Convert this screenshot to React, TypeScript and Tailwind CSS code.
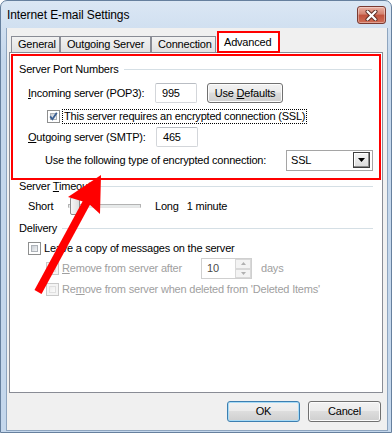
import React from "react";

const U = ({ children }: { children: React.ReactNode }) => (
  <span className="underline underline-offset-[1px] decoration-[1px]">{children}</span>
);

function Checkbox({ checked = false, disabled = false }: { checked?: boolean; disabled?: boolean }) {
  return (
    <div
      className={
        disabled
          ? "relative w-[13px] h-[13px] shrink-0 border border-[#c9c9c9] bg-[#f4f4f4] p-[2px]"
          : "relative w-[13px] h-[13px] shrink-0 border border-[#8e8f8f] bg-white p-[2px]"
      }
    >
      <div
        className={
          disabled
            ? "w-full h-full border border-[#e0e0e0] bg-[linear-gradient(135deg,#ececec,#fbfbfb)]"
            : "w-full h-full border border-[#adb2b8] bg-[linear-gradient(135deg,#c9ced4,#f4f5f6)]"
        }
      />
      {checked && (
        <svg className="absolute left-0 top-0" width="11" height="11" viewBox="0 0 11 11">
          <path d="M2.2 5.4 L4.4 8.2 L8.8 1.8" fill="none" stroke="#3a5f92" strokeWidth="1.8" />
        </svg>
      )}
    </div>
  );
}

function Tab({ w, children }: { w: string; children: React.ReactNode }) {
  return (
    <div
      className={`${w} h-[16px] border-t border-l border-r border-[#898c95] bg-[linear-gradient(#f2f2f2,#e2e2e2)] pl-[6px] flex items-center text-[11px] tracking-[-0.2px] text-black`}
    >
      {children}
    </div>
  );
}

export default function App() {
  return (
    <div className="relative w-[392px] h-[433px] overflow-hidden rounded-t-[7px] border border-[#66809e] bg-[linear-gradient(#dbe7f4,#c4d7ec_60px,#c4d7ec)] font-['Liberation_Sans',Arial,sans-serif] text-black">
      {/* Title bar */}
      <div className="h-[27px] flex items-center pl-[6px] pr-[5px]">
        <div className="text-[12px] tracking-[-0.1px] text-black">Internet E-mail Settings</div>
        <div className="flex-1" />
        <div className="w-[29px] h-[18px] mt-[1px] rounded-[3px] border border-[#7a3a31] bg-[linear-gradient(#eab0a2,#d3826f_45%,#c0513c_50%,#cf6e57)] shadow-[inset_0_0_0_1px_rgba(255,255,255,0.35)] flex items-center justify-center">
          <svg width="13" height="11" viewBox="0 0 13 11">
            <path d="M2.5 1.5 L10.5 9.5 M10.5 1.5 L2.5 9.5" stroke="#5a2a22" strokeWidth="4" strokeLinecap="round" />
            <path d="M2.5 1.5 L10.5 9.5 M10.5 1.5 L2.5 9.5" stroke="#ffffff" strokeWidth="2.2" strokeLinecap="round" />
          </svg>
        </div>
      </div>

      {/* middle */}
      <div className="flex">
        <div className="w-[5px]" />
        <div className="w-[382px] h-[403px] border-x border-b border-[#8ea5bf] bg-[#f0f0f0] flex flex-col">
          {/* Tabs */}
          <div className="h-[24px] flex items-end pl-[4px]">
            <Tab w="w-[49px]">General</Tab>
            <Tab w="w-[91px]">Outgoing Server</Tab>
            <Tab w="w-[65px]">Connection</Tab>
            <div className="relative z-10 ml-[1px] mb-[-1px] w-[63px] h-[22px] border-2 border-[#ff0000] bg-white pl-[5px] flex items-center text-[11px] tracking-[-0.2px]">
              Advanced
            </div>
          </div>

          {/* Panel */}
          <div className="ml-[2px] w-[374px] h-[341px] border border-[#898c95] bg-white flex flex-col text-[11px] tracking-[-0.2px]">
            {/* Red box - Server Port Numbers */}
            <div className="mt-[1px] ml-[1px] w-[370px] border-2 border-[#ff0000] pt-[6px] pb-[8px] flex flex-col">
              <div className="h-[14px] flex items-center pl-[6px] pr-[7px]">
                <span>Server Port Numbers</span>
                <div className="flex-1 ml-[5px] h-px bg-[#d5dfe5]" />
              </div>
              <div className="mt-[7px] h-[20px] flex items-center pl-[15px]">
                <div className="w-[127px]">
                  <U>I</U>ncoming server (POP3):
                </div>
                <div className="w-[42px] h-[20px] rounded-[2px] border border-[#d3d6da] border-t-[#b9bdc3] bg-white pl-[6px] flex items-center">
                  995
                </div>
                <button className="ml-[10px] w-[76px] h-[20px] rounded-[3px] border border-[#707070] bg-[linear-gradient(#f2f2f2,#ebebeb_45%,#dddddd_50%,#cfcfcf)] shadow-[inset_0_0_0_1px_#fbfbfb] flex items-center justify-center text-[11px] tracking-[-0.2px]">
                  Use&nbsp;<U>D</U>efaults
                </button>
              </div>
              <div className="mt-[6px] h-[14px] flex items-center pl-[34px]">
                <Checkbox checked />
                <div className="ml-[2px] h-[15px] border border-dotted border-black pl-[1px] pr-[1px] flex items-center">
                  This server requires an encrypted connection (SSL)
                </div>
              </div>
              <div className="mt-[4px] h-[20px] flex items-center pl-[15px]">
                <div className="w-[128px]">
                  <U>O</U>utgoing server (SMTP):
                </div>
                <div className="w-[42px] h-[20px] rounded-[2px] border border-[#d3d6da] border-t-[#b9bdc3] bg-white pl-[6px] flex items-center">
                  465
                </div>
              </div>
              <div className="mt-[3px] h-[20px] flex items-center pl-[32px]">
                <div className="w-[241px]">Use the following type of encrypted connection:</div>
                <div className="w-[87px] h-[21px] border border-[#a5a5a5] bg-white pl-[4px] pr-[2px] flex items-center">
                  <span className="flex-1">SSL</span>
                  <div className="w-[17px] h-[16px] border border-[#3f3f3f] bg-[linear-gradient(#f4f4f4,#dcdcdc)] shadow-[inset_-1px_-1px_0_#8a8a8a,inset_1px_1px_0_#ffffff] flex items-center justify-center">
                    <svg width="7" height="4" viewBox="0 0 7 4">
                      <path d="M0 0 L7 0 L3.5 4 Z" fill="#000" />
                    </svg>
                  </div>
                </div>
              </div>
            </div>

            {/* Server Timeout */}
            <div className="h-[12px] flex items-center pl-[9px] pr-[9px]">
              <span>
                Server <U>T</U>imeout
              </span>
              <div className="flex-1 ml-[5px] h-px bg-[#d5dfe5]" />
            </div>
            <div className="mt-[4px] h-[20px] flex items-center pl-[18px]">
              <div className="w-[40px]">Short</div>
              <div className="relative w-[73px] h-[20px]">
                <div className="absolute left-0 right-0 top-[8px] h-[4px] border border-[#b3b3b3] border-b-[#e6e6e6] bg-[#e7eaea]" />
                <div className="absolute left-[2px] top-[1px] w-[10px] h-[18px] rounded-[2px] border border-[#8c8c8c] bg-[linear-gradient(90deg,#f7f7f7,#dedede)]" />
              </div>
              <div className="ml-[14px]">Long</div>
              <div className="ml-[8px]">1 minute</div>
            </div>

            {/* Delivery */}
            <div className="mt-[6px] h-[13px] flex items-center pl-[9px] pr-[9px]">
              <span>Delivery</span>
              <div className="flex-1 ml-[5px] h-px bg-[#d5dfe5]" />
            </div>
            <div className="mt-[6px] h-[14px] flex items-center pl-[18px]">
              <Checkbox />
              <div className="ml-[3px]">Leave a copy of messages on the server</div>
            </div>
            <div className="mt-[3px] h-[21px] flex items-center pl-[36px] text-[#a0a0a0]">
              <Checkbox disabled />
              <div className="ml-[3px] w-[139px]">
                <U>R</U>emove from server after
              </div>
              <div className="w-[51px] h-[21px] border border-[#cfcfcf] bg-white flex items-center">
                <span className="flex-1 pl-[5px] text-[#4a4a4a]">10</span>
                <div className="w-[16px] h-[19px] flex flex-col">
                  <div className="flex-1 border border-[#d8d8d8] bg-[#f3f3f3] flex items-center justify-center">
                    <svg width="5" height="3" viewBox="0 0 5 3">
                      <path d="M0 3 L5 3 L2.5 0 Z" fill="#b0b0b0" />
                    </svg>
                  </div>
                  <div className="flex-1 border border-[#d8d8d8] bg-[#f3f3f3] flex items-center justify-center">
                    <svg width="5" height="3" viewBox="0 0 5 3">
                      <path d="M0 0 L5 0 L2.5 3 Z" fill="#b0b0b0" />
                    </svg>
                  </div>
                </div>
              </div>
              <div className="ml-[9px]">days</div>
            </div>
            <div className="mt-[3px] h-[15px] flex items-center pl-[36px] text-[#a0a0a0]">
              <Checkbox disabled />
              <div className="ml-[3px]">
                Re<U>m</U>ove from server when deleted from 'Deleted Items'
              </div>
            </div>
          </div>

          {/* Buttons */}
          <div className="mt-[8px] flex justify-end gap-[8px] pr-[6px]">
            <button className="w-[73px] h-[21px] rounded-[3px] border border-[#3c7fb1] bg-[linear-gradient(#f2f2f2,#ebebeb_45%,#dddddd_50%,#cfcfcf)] shadow-[inset_0_0_0_1px_#a8dbf6] text-[11px] tracking-[-0.2px] flex items-center justify-center">
              OK
            </button>
            <button className="w-[73px] h-[21px] rounded-[3px] border border-[#707070] bg-[linear-gradient(#f2f2f2,#ebebeb_45%,#dddddd_50%,#cfcfcf)] shadow-[inset_0_0_0_1px_#fbfbfb] text-[11px] tracking-[-0.2px] flex items-center justify-center">
              Cancel
            </button>
          </div>
        </div>
      </div>

      {/* Red annotation arrow */}
      <svg className="pointer-events-none absolute left-[-1px] top-[-1px]" width="392" height="433" viewBox="0 0 392 433">
        <line x1="38" y1="292" x2="89" y2="198" stroke="#ff0000" strokeWidth="8" />
        <polygon points="101,175 100,214 88,203 68,197" fill="#ff0000" />
      </svg>
    </div>
  );
}
